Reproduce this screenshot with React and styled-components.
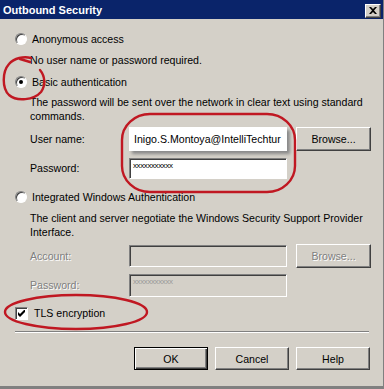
import React from 'react';
import styled, { createGlobalStyle, css } from 'styled-components';

const Global = createGlobalStyle`
	html, body {
		margin: 0;
		padding: 0;
		background: #d4d0c8;
	}
	body {
		font-family: Tahoma, "Liberation Sans", Arial, sans-serif;
		font-size: 10.6px;
		color: #000;
	}
`;

const Window = styled.div`
	position: relative;
	width: 384px;
	height: 389px;
	box-sizing: border-box;
	background: #d4d0c8;
	border-bottom: 3px solid #808080;
	border-right: 1px solid #808080;
	overflow: hidden;
	white-space: nowrap;
`;

const TitleBar = styled.div`
	height: 19px;
	background: #0a246a;
	display: flex;
	align-items: center;
	justify-content: space-between;
	padding: 0 2px 0 3px;
	color: #fff;
	font-weight: bold;
	font-size: 11px;
`;

const CloseBtn = styled.div`
	width: 16px;
	height: 14px;
	box-sizing: border-box;
	background: #d4d0c8;
	border: 1px solid;
	border-color: #fff #404040 #404040 #fff;
	box-shadow: inset -1px -1px #808080;
	display: flex;
	align-items: center;
	justify-content: center;
	margin-top: 2px;
`;

const Body = styled.div`
	padding: 13px 13px 0 15px;
	display: flex;
	flex-direction: column;
`;

const RadioRow = styled.label`
	display: flex;
	align-items: center;
	gap: 5px;
	height: 14px;
	margin-top: ${p => p.$top || 0}px;
`;

const RadioCircle = styled.span`
	width: 12px;
	height: 12px;
	box-sizing: border-box;
	border-radius: 50%;
	background: #fff;
	border: 1px solid;
	border-color: #808080 #fff #fff #808080;
	box-shadow: inset 1px 1px #404040;
	display: flex;
	align-items: center;
	justify-content: center;
	&::after {
		content: '';
		width: 4px;
		height: 4px;
		border-radius: 50%;
		background: ${p => (p.$checked ? '#000' : 'transparent')};
	}
`;

const Desc = styled.div`
	margin-left: 15px;
	margin-top: ${p => p.$top || 0}px;
	line-height: 14px;
`;

const FieldRow = styled.div`
	display: grid;
	grid-template-columns: 90px 158px 75px;
	column-gap: 9px;
	align-items: center;
	margin-left: 15px;
	margin-top: ${p => p.$top || 0}px;
	height: ${p => p.$h || 22}px;
`;

const Label = styled.span`
	color: ${p => (p.$disabled ? '#808080' : '#000')};
	${p =>
		p.$disabled &&
		css`
			text-shadow: 1px 1px #fff;
		`}
`;

const TextBox = styled.div`
	height: ${p => p.$h || 21}px;
	box-sizing: border-box;
	background: ${p => (p.$disabled ? '#d4d0c8' : '#fff')};
	border: 1px solid;
	border-color: #808080 #fff #fff #808080;
	box-shadow: inset 1px 1px #404040;
	padding: 2px 3px;
	display: flex;
	align-items: flex-start;
	overflow: hidden;
`;

const PastedBox = styled.div`
	height: 24px;
	background: #fff;
	box-shadow: 3px 3px 3px #8a8a8a;
	display: flex;
	align-items: center;
	padding: 0 5px;
	overflow: hidden;
`;

const Mask = styled.span`
	font-size: 8px;
	letter-spacing: -0.4px;
	color: ${p => (p.$disabled ? '#9a9a9a' : '#000')};
	line-height: 9px;
`;

const Button = styled.div`
	height: ${p => p.$h || 23}px;
	box-sizing: border-box;
	background: #d4d0c8;
	border: 1px solid;
	border-color: #fff #404040 #404040 #fff;
	box-shadow: inset -1px -1px #808080;
	display: flex;
	align-items: center;
	justify-content: center;
	color: ${p => (p.$disabled ? '#808080' : '#000')};
	${p =>
		p.$disabled &&
		css`
			text-shadow: 1px 1px #fff;
		`}
	${p =>
		p.$default &&
		css`
			border: 1px solid #000;
			box-shadow: inset 1px 1px #fff, inset -1px -1px #404040, inset -2px -2px #808080;
		`}
`;

const CheckRow = styled.label`
	display: flex;
	align-items: center;
	gap: 6px;
	height: 14px;
	margin-top: 9px;
`;

const CheckBox = styled.span`
	width: 13px;
	height: 13px;
	box-sizing: border-box;
	background: #fff;
	border: 1px solid;
	border-color: #808080 #fff #fff #808080;
	box-shadow: inset 1px 1px #404040;
	display: flex;
	align-items: center;
	justify-content: center;
`;

const Separator = styled.div`
	height: 0;
	border-top: 1px solid #808080;
	border-bottom: 1px solid #fff;
	margin-top: 11px;
	margin-right: 1px;
`;

const ButtonBar = styled.div`
	display: grid;
	grid-template-columns: repeat(3, 74px);
	column-gap: 7px;
	justify-content: end;
	margin-top: 14px;
`;

const Overlay = styled.svg`
	position: absolute;
	left: 0;
	top: 0;
	pointer-events: none;
`;

const Radio = ({ checked, children, top }) => (
	<RadioRow $top={top}>
		<RadioCircle $checked={checked} />
		<span>{children}</span>
	</RadioRow>
);

export default function App() {
	return (
		<>
			<Global />
			<Window>
				<TitleBar>
					<span>Outbound Security</span>
					<CloseBtn>
						<svg width="8" height="7" viewBox="0 0 8 7">
							<path d="M0 0h2l2 2 2-2h2L5 3.5 8 7H6L4 5 2 7H0l3-3.5z" fill="#000" />
						</svg>
					</CloseBtn>
				</TitleBar>
				<Body>
					<Radio top={0}>Anonymous access</Radio>
					<Desc $top={7}>No user name or password required.</Desc>
					<Radio checked top={8}>Basic authentication</Radio>
					<Desc $top={6}>
						The password will be sent over the network in clear text using standard
						<br />
						commands.
					</Desc>
					<FieldRow $top={4} $h={24}>
						<Label>User name:</Label>
						<PastedBox>Inigo.S.Montoya@IntelliTechtur</PastedBox>
						<Button $h={24}>Browse...</Button>
					</FieldRow>
					<FieldRow $top={6}>
						<Label>Password:</Label>
						<TextBox>
							<Mask>xxxxxxxxxxx</Mask>
						</TextBox>
						<span />
					</FieldRow>
					<Radio top={11}>Integrated Windows Authentication</Radio>
					<Desc $top={7}>
						The client and server negotiate the Windows Security Support Provider
						<br />
						Interface.
					</Desc>
					<FieldRow $top={5} $h={24}>
						<Label $disabled>Account:</Label>
						<TextBox $disabled $h={22} />
						<Button $disabled $h={24}>Browse...</Button>
					</FieldRow>
					<FieldRow $top={5} $h={24}>
						<Label $disabled>Password:</Label>
						<TextBox $disabled $h={23}>
							<Mask $disabled>xxxxxxxxxxx</Mask>
						</TextBox>
						<span />
					</FieldRow>
					<CheckRow>
						<CheckBox>
							<svg width="7" height="7" viewBox="0 0 7 7">
								<path d="M0 2v3l2 2 5-5V-1L2 4z" fill="#000" />
							</svg>
						</CheckBox>
						<span>TLS encryption</span>
					</CheckRow>
					<Separator />
					<ButtonBar>
						<Button $default>OK</Button>
						<Button>Cancel</Button>
						<Button>Help</Button>
					</ButtonBar>
				</Body>
				<Overlay width="384" height="389" viewBox="0 0 384 389">
					<g fill="none" stroke="#c01822" strokeWidth="2.4" strokeLinecap="round">
						<path d="M31 58 C 24 56, 14 58, 9 64 C 2 72, 2 88, 9 95 C 17 102, 34 100, 41 92 C 46 85, 45 76, 40 70" />
						<path d="M20 59 L 30 62" />
						<rect x="122" y="114" width="173" height="78" rx="28" ry="26" />
						<ellipse cx="76" cy="312" rx="71" ry="17" />
					</g>
				</Overlay>
			</Window>
		</>
	);
}
